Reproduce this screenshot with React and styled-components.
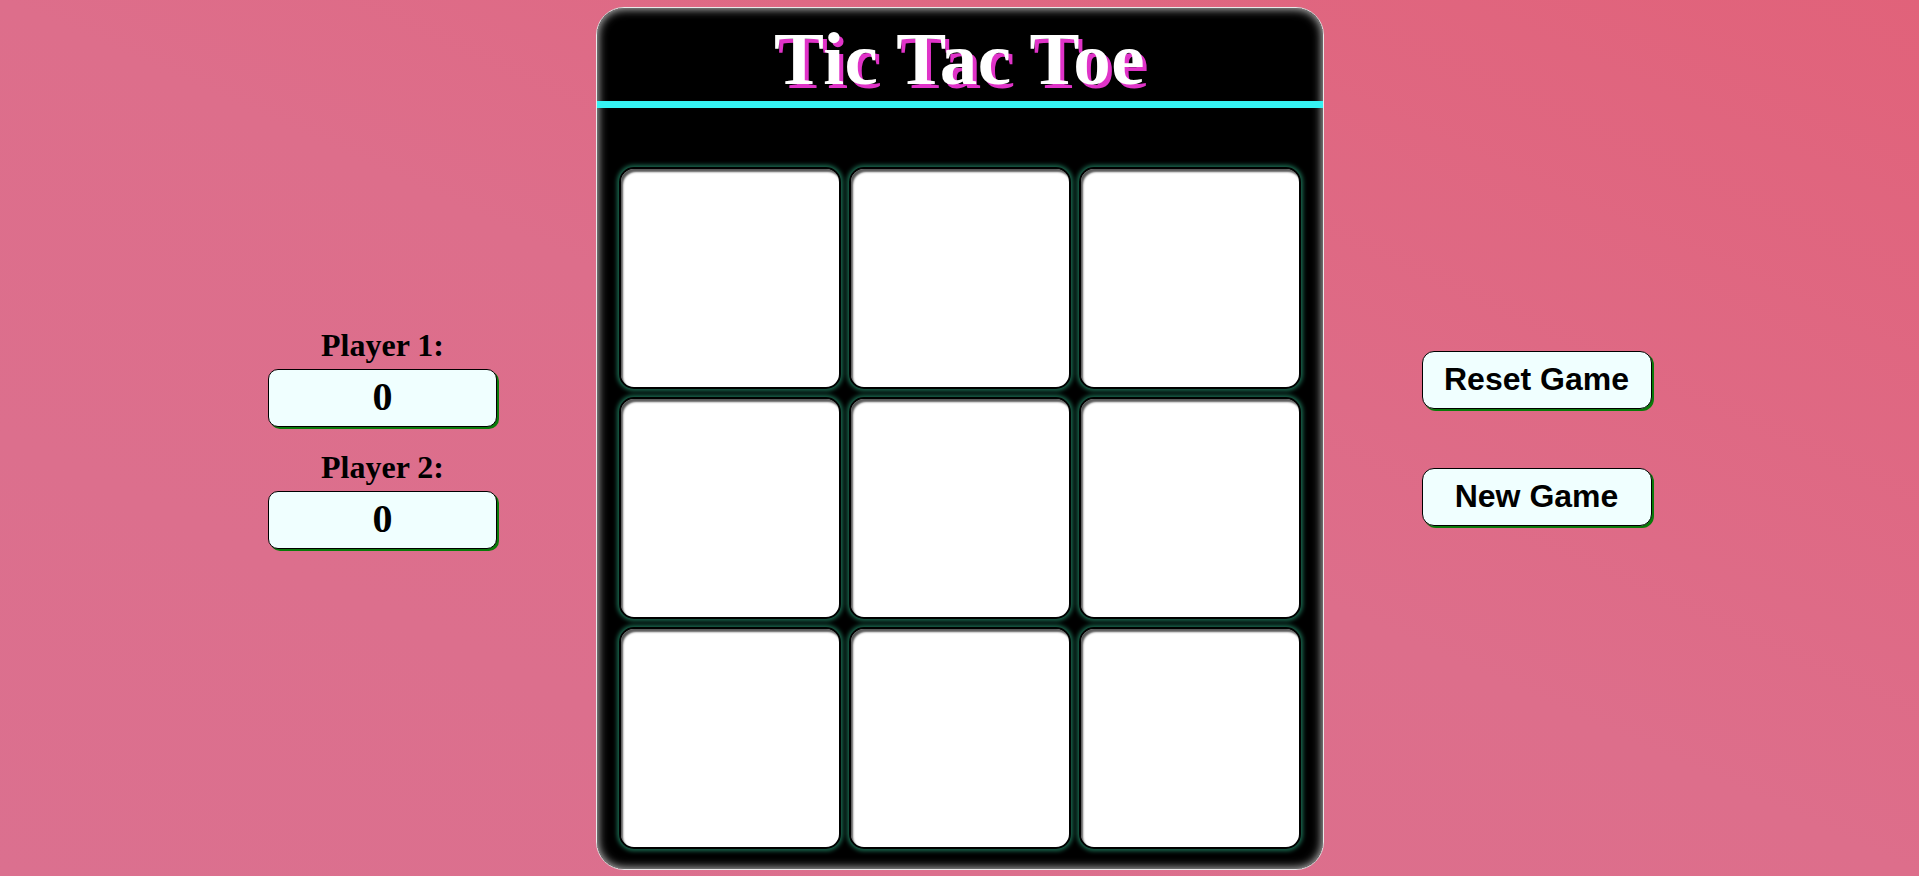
import React from 'react';
import styled, { createGlobalStyle } from 'styled-components';

const GlobalStyle = createGlobalStyle`
  html, body {
    margin: 0;
    padding: 0;
  }
  body {
    font-family: "Liberation Serif", "Times New Roman", serif;
    background: linear-gradient(to bottom left, #e1627a 0%, #dd6e8b 50%, #db708f 100%);
    min-height: 100vh;
  }
`

const Page = styled.div`
  height: 100vh;
  display: flex;
  justify-content: center;
  align-items: center;
`

const Side = styled.div`
  width: 426px;
  display: flex;
  flex-direction: column;
  align-items: center;
  gap: ${props => props.gap}px;
`

const ScoreBlock = styled.div`
  display: flex;
  flex-direction: column;
  align-items: center;
`

const Label = styled.h2`
  margin: 0 0 5px;
  font-family: "Liberation Serif", "Times New Roman", serif;
  font-size: 32px;
  font-weight: bold;
  color: #000;
`

const ScoreBox = styled.div`
  box-sizing: border-box;
  width: 229px;
  height: 58px;
  display: flex;
  align-items: center;
  justify-content: center;
  background: #f0ffff;
  border: 1px solid #000;
  border-radius: 10px;
  box-shadow: 2px 2px 0 #0a7a0a;
  font-family: "Liberation Serif", "Times New Roman", serif;
  font-size: 40px;
  font-weight: bold;
  padding-bottom: 4px;
`

const Board = styled.div`
  box-sizing: border-box;
  width: 728px;
  height: 863px;
  background: #000;
  border: 1px solid #e8e8e8;
  border-radius: 28px;
  box-shadow: inset 0 0 10px 1px #c4c4c4;
  display: flex;
  flex-direction: column;
  overflow: hidden;
`

const Header = styled.div`
  padding-top: 8px;
  border-bottom: 7px solid #35f2f2;
  text-align: center;
`

const Title = styled.h1`
  margin: 0;
  font-family: "Liberation Serif", "Times New Roman", serif;
  font-size: 75px;
  font-weight: bold;
  line-height: 85px;
  letter-spacing: 0.5px;
  color: #fff;
  text-shadow: 4px 4px 0 #e033c8;
`

const Grid = styled.div`
  margin-top: 59px;
  display: grid;
  grid-template-columns: repeat(3, 222px);
  grid-template-rows: repeat(3, 222px);
  gap: 8px;
  justify-content: center;
`

const Cell = styled.button`
  box-sizing: border-box;
  background: #fff;
  border: 2px solid #000;
  border-radius: 15px;
  box-shadow: 0 0 4px 2px #1a6a50, inset 2px 3px 2px #5a5a5a;
  cursor: pointer;
  padding: 0;
`

const ActionButton = styled.button`
  box-sizing: border-box;
  width: 230px;
  height: 58px;
  background: #f0ffff;
  border: 1px solid #000;
  border-radius: 12px;
  box-shadow: 2px 2px 0 #0a7a0a;
  font-family: "Liberation Sans", Arial, sans-serif;
  font-size: 32px;
  font-weight: bold;
  color: #000;
  cursor: pointer;
  padding: 0;
`

const players = ['Player 1:', 'Player 2:'];

const App = () => {
    const cells = Array.from({ length: 9 });
    return (
        <>
            <GlobalStyle/>
            <Page>
                <Side gap={22}>
                    {players.map(name => (
                        <ScoreBlock key={name}>
                            <Label>{name}</Label>
                            <ScoreBox>0</ScoreBox>
                        </ScoreBlock>
                    ))}
                </Side>
                <Board>
                    <Header>
                        <Title>Tic Tac Toe</Title>
                    </Header>
                    <Grid>
                        {cells.map((_, i) => <Cell key={i}/>)}
                    </Grid>
                </Board>
                <Side gap={59}>
                    <ActionButton>Reset Game</ActionButton>
                    <ActionButton>New Game</ActionButton>
                </Side>
            </Page>
        </>
    )
}

export default App;
